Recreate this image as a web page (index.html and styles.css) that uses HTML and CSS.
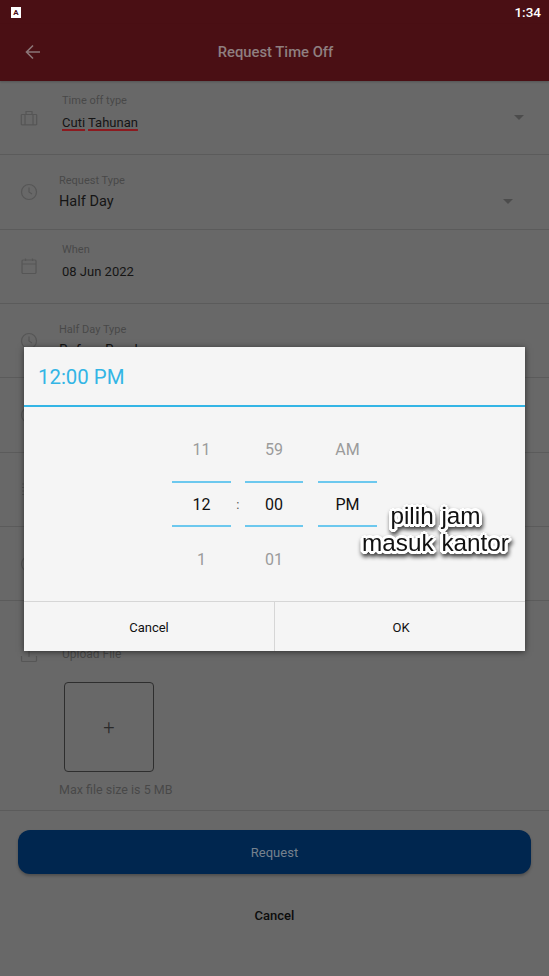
FILE: index.html
```html
<!doctype html>
<html lang="en">
<head>
    <meta charset="UTF-8">
    <meta name="viewport" content="width=device-width, initial-scale=1.0">
    <title>Request Time Off</title>
    <link rel="stylesheet" href="styles.css">
</head>
<body>
    <div class="statusbar">
        <span class="status-app">A</span>
        <span class="status-time">1:34</span>
    </div>

    <header>
        <svg class="back" viewBox="0 0 16 16"><path d="M15 8H2M8 1.500 1.500 8 8 14.500"/></svg>
        <h1>Request Time Off</h1>
    </header>

    <main>
        <section class="field">
            <svg class="icon" viewBox="0 0 18 18"><path d="M2 5.500h14a.7.7 0 0 1 .7.7v9a.7.7 0 0 1-.7.7H2a.7.7 0 0 1-.7-.7v-9a.7.7 0 0 1 .7-.7zM6 5.500V2.500h6v3M5 5.500v10.400M13 5.500v10.400"/></svg>
            <div class="field-text">
                <label>Time off type</label>
                <div class="value small"><span class="spell">Cuti</span> <span class="spell">Tahunan</span></div>
            </div>
            <span class="caret"></span>
        </section>

        <section class="field wide">
            <svg class="icon" viewBox="0 0 18 18"><circle cx="9" cy="9" r="7.500"/><path d="M9 4.500V9l3 2"/></svg>
            <div class="field-text">
                <label>Request Type</label>
                <div class="value">Half Day</div>
            </div>
            <span class="caret"></span>
        </section>

        <section class="field">
            <svg class="icon" viewBox="0 0 18 18"><rect x="2" y="3" width="14" height="13.500" rx="1"/><path d="M2 7h14M5.500 1.500V4M12.500 1.500V4"/></svg>
            <div class="field-text">
                <label>When</label>
                <div class="value small">08 Jun 2022</div>
            </div>
        </section>

        <section class="field wide">
            <svg class="icon" viewBox="0 0 18 18"><circle cx="9" cy="9" r="7.500"/><path d="M9 4.500V9l3 2"/></svg>
            <div class="field-text">
                <label>Half Day Type</label>
                <div class="value">Before Break</div>
            </div>
        </section>

        <section class="field">
            <svg class="icon" viewBox="0 0 18 18"><circle cx="9" cy="9" r="7.500"/><path d="M9 4.500V9l3 2"/></svg>
        </section>

        <section class="field">
            <svg class="icon" viewBox="0 0 18 18"><path d="M2 4h2M2 7.500h2M2 11h2M2 14.500h2M6 4h10M6 7.500h10M6 11h10M6 14.500h10"/></svg>
        </section>

        <section class="field">
            <svg class="icon" viewBox="0 0 18 18"><circle cx="9" cy="9" r="7.500"/></svg>
        </section>

        <section class="upload">
            <div class="upload-head">
                <svg class="icon" viewBox="0 0 18 18"><path d="M1.500 11v4.500a1 1 0 0 0 1 1h13a1 1 0 0 0 1-1V11M9 12V2M5.500 5.500 9 2l3.500 3.500"/></svg>
                <label>Upload File</label>
            </div>
            <div class="upload-box">+</div>
            <div class="upload-note">Max file size is 5 MB</div>
        </section>

        <div class="actions">
            <button class="btn-request">Request</button>
            <button class="btn-cancel">Cancel</button>
        </div>
    </main>

    <div class="dialog">
        <div class="dialog-title">12:00 PM</div>
        <div class="picker">
            <div class="wheel">
                <span class="wheel-item">11</span>
                <span class="wheel-item current">12</span>
                <span class="wheel-item">1</span>
            </div>
            <span class="colon">:</span>
            <div class="wheel">
                <span class="wheel-item">59</span>
                <span class="wheel-item current">00</span>
                <span class="wheel-item">01</span>
            </div>
            <div class="wheel last">
                <span class="wheel-item">AM</span>
                <span class="wheel-item current">PM</span>
                <span class="wheel-item"></span>
            </div>
        </div>
        <div class="dialog-buttons">
            <button>Cancel</button>
            <button>OK</button>
        </div>
    </div>

    <div class="note">pilih jam<br>masuk kantor</div>
</body>
</html>
```

FILE: styles.css
```css
:root {
    --cl-page: #686868;
    --cl-line: #5b5b5b;
    --cl-header: #4a0f14;
    --cl-label: #484848;
    --cl-value: #151515;
    --cl-icon: #565656;
    --cl-blue: #33b5e5;
    --cl-blue-light: #6cc8ee;
    --cl-dialog: #f5f5f5;
}

html, body {
    font-family: Roboto, sans-serif;
    padding: 0;
    margin: 0;
    width: 549px;
    height: 976px;
    overflow: hidden;
    background: var(--cl-page);
}

body {
    position: relative;
}

button {
    font-family: inherit;
    border: none;
    background: none;
    padding: 0;
}

.statusbar {
    display: flex;
    align-items: center;
    justify-content: space-between;
    height: 24px;
    padding: 0 8px 0 11px;
    background: var(--cl-header);
}

.status-app {
    width: 10px;
    height: 11px;
    background: white;
    color: #4a0f14;
    font-size: 8px;
    font-weight: 700;
    line-height: 11px;
    text-align: center;
}

.status-time {
    color: white;
    font-size: 13.5px;
    font-weight: 500;
}

header {
    position: relative;
    display: flex;
    align-items: center;
    justify-content: center;
    height: 57px;
    padding-left: 2px;
    box-sizing: border-box;
    background: var(--cl-header);
    box-shadow: 0 1px 2px rgba(0, 0, 0, 0.2);
}

.back {
    position: absolute;
    left: 25px;
    top: 20px;
    width: 16px;
    height: 16px;
    fill: none;
    stroke: #8b7577;
    stroke-width: 1.6;
}

h1 {
    margin: 0 0 1px;
    font-size: 14.8px;
    font-weight: 500;
    color: #8f7f80;
}

.field {
    display: flex;
    box-sizing: border-box;
    height: 74.33px;
    padding-left: 20px;
    border-bottom: solid 1px var(--cl-line);
}

.icon {
    flex: none;
    align-self: center;
    width: 18px;
    height: 18px;
    fill: none;
    stroke: var(--cl-icon);
    stroke-width: 1.2;
}

.field-text {
    padding: 13px 0 0 24px;
}

.field.wide .field-text {
    padding: 19px 0 0 21px;
}

label {
    display: block;
    font-size: 11px;
    line-height: 14px;
    color: var(--cl-label);
}

.value {
    margin-top: 4px;
    font-size: 14.5px;
    line-height: 20px;
    color: var(--cl-value);
}

.value.small {
    margin-top: 5px;
    font-size: 13px;
}

.spell {
    text-decoration: underline #8c1a1f 1.5px;
    text-underline-offset: 2px;
}

.caret {
    align-self: center;
    margin: 0 25px 0 auto;
    border-left: 5px solid transparent;
    border-right: 5px solid transparent;
    border-top: 5px solid #4c4c4c;
}

.field.wide .caret {
    align-self: flex-start;
    margin: 44px 36px 0 auto;
}

.upload {
    box-sizing: border-box;
    height: 210px;
    padding: 44px 0 0 20px;
    border-bottom: solid 1px var(--cl-line);
}

.upload-head {
    display: flex;
    align-items: center;
}

.upload-head label {
    margin-left: 24px;
    font-size: 12px;
}

.upload-box {
    display: flex;
    align-items: center;
    justify-content: center;
    box-sizing: border-box;
    width: 90px;
    height: 90px;
    margin: 19px 0 0 44px;
    border: solid 1px #2e2e2e;
    border-radius: 4px;
    font-size: 20px;
    font-weight: 300;
    color: #2a2a2a;
}

.upload-note {
    margin: 10px 0 0 39px;
    font-size: 12.5px;
    line-height: 16px;
    color: var(--cl-label);
}

.actions {
    display: flex;
    flex-direction: column;
    align-items: center;
    padding: 19px 18px 0;
}

.btn-request {
    width: 100%;
    height: 44px;
    border-radius: 12px;
    background: #00264f;
    box-shadow: 0 2px 3px rgba(0, 0, 0, 0.25);
    color: #76818e;
    font-size: 13px;
}

.btn-cancel {
    margin-top: 34px;
    font-size: 13px;
    font-weight: 500;
    line-height: 16px;
    color: #0c0c0c;
}

.dialog {
    position: absolute;
    left: 24px;
    top: 347px;
    width: 501px;
    height: 304px;
    display: flex;
    flex-direction: column;
    background: var(--cl-dialog);
    box-shadow: 0 1px 6px rgba(0, 0, 0, 0.55);
}

.dialog-title {
    box-sizing: border-box;
    height: 60px;
    padding: 18px 0 0 14px;
    border-bottom: solid 2px var(--cl-blue);
    color: var(--cl-blue);
    font-size: 20.4px;
    line-height: 24px;
}

.picker {
    flex: 1;
    display: flex;
    justify-content: center;
    padding-top: 19px;
}

.wheel {
    display: flex;
    flex-direction: column;
    width: 58.5px;
}

.wheel.last {
    margin-left: 15px;
}

.wheel-item {
    height: 46px;
    line-height: 48px;
    text-align: center;
    font-size: 16px;
    color: #9b9b9b;
    margin-bottom: 9px;
}

.wheel-item.current {
    box-sizing: border-box;
    border-top: solid 2px var(--cl-blue-light);
    border-bottom: solid 2px var(--cl-blue-light);
    color: #111;
    line-height: 44px;
}

.colon {
    width: 14px;
    padding-top: 71px;
    text-align: center;
    font-size: 13px;
    color: #555;
}

.dialog-buttons {
    display: grid;
    grid-template-columns: 250px 1fr;
    height: 50px;
    border-top: solid 1px #d6d6d6;
    box-sizing: border-box;
}

.dialog-buttons button {
    padding-top: 2px;
    font-size: 13px;
    color: #111;
}

.dialog-buttons button + button {
    padding-left: 2px;
    border-left: solid 1px #d6d6d6;
}

.note {
    position: absolute;
    left: 350px;
    top: 502px;
    width: 171px;
    text-align: center;
    font-family: "Liberation Sans", sans-serif;
    font-size: 24.3px;
    line-height: 27px;
    word-spacing: 1px;
    color: #111;
    text-shadow:
        3px 0 0 white, -3px 0 0 white, 0 3px 0 white, 0 -3px 0 white,
        2px 2px 0 white, -2px 2px 0 white, 2px -2px 0 white, -2px -2px 0 white,
        3px 1px 0 white, -3px 1px 0 white, 1px 3px 0 white, -1px 3px 0 white;
    filter: drop-shadow(1px 3px 2px rgba(0, 0, 0, 0.75));
}
```
